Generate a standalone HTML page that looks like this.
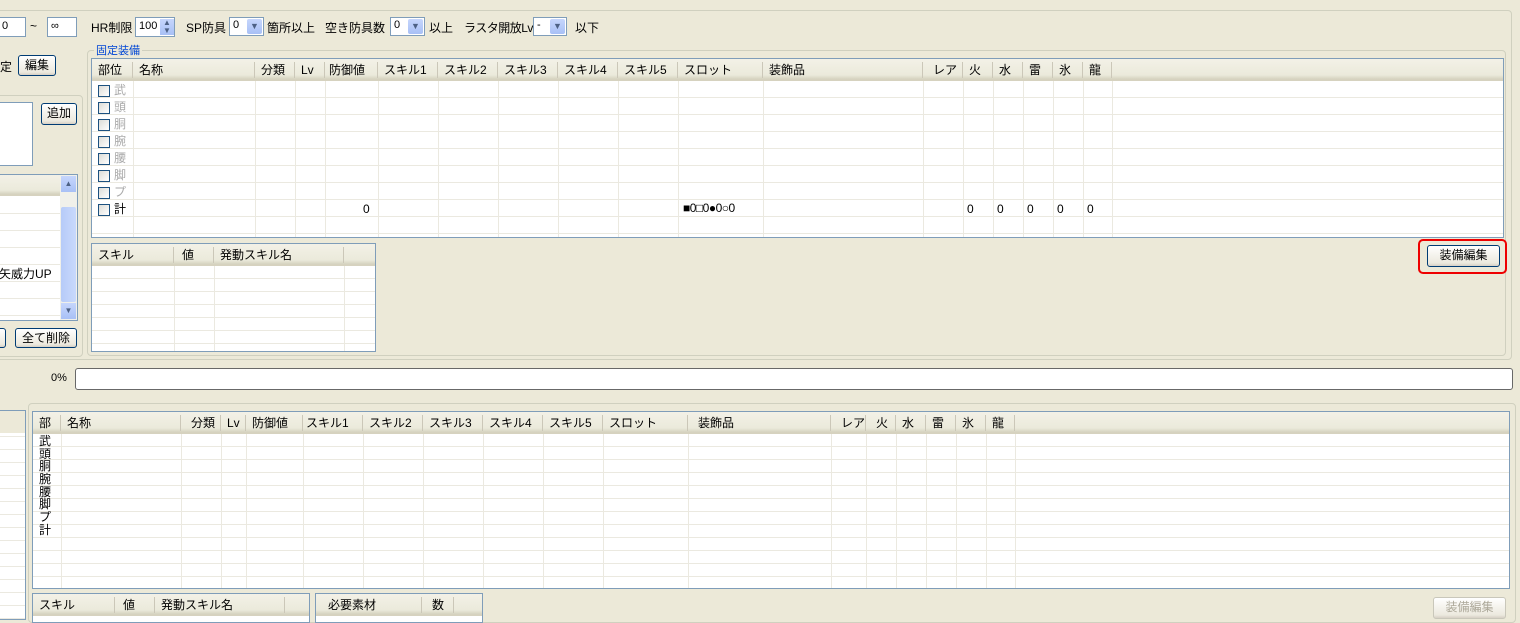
<!DOCTYPE html>
<html><head><meta charset="utf-8"><style>
*{box-sizing:border-box;margin:0;padding:0}
body{width:1520px;height:612px;overflow:hidden;background:#ece9d8;font-family:"Liberation Sans","Noto Sans CJK JP",sans-serif;font-size:12px;color:#000;position:relative}
.a{position:absolute;white-space:nowrap}
.grp{position:absolute;border:1px solid #d0d0bf;border-radius:4px}
.inp{position:absolute;background:#fff;border:1px solid #7f9db9;height:20px;padding:2px 3px;font-size:11px}
.btn{position:absolute;border:1px solid #003c74;border-radius:3px;background:linear-gradient(#fff,#ece9de 85%,#d6d0c5);text-align:center;font-size:12px;line-height:18px}
.tbl{position:absolute;border:1px solid #7f9db9;background:#fff;overflow:hidden}
.hd{position:absolute;left:0;top:0;right:0;height:22px;background:linear-gradient(#f3f1e7,#ebeadb 80%,#d6d3c0);border-bottom:2px solid #d6d2bf;display:flex}
.hd div{border-right:1px solid #cbc7b8;height:16px;margin-top:3px;padding-left:6px;line-height:16px;flex:none;font-size:12px}
.bd{position:absolute;left:0;right:0;bottom:0}
.cl{position:absolute;top:0;bottom:0;width:1px;background:#ebe9e0}
.cmb{position:absolute;background:#fff;border:1px solid #7f9db9;height:19px;font-size:11px;padding:1px 3px}
.cmb i{position:absolute;right:1px;top:1px;width:15px;height:15px;background:linear-gradient(#c6d6fc,#a8c0f6);border-radius:2px;color:#4d6185;font-style:normal;font-size:9px;text-align:center;line-height:15px}
.cb{display:inline-block;width:12px;height:12px;border:1px solid #1c5180;background:linear-gradient(135deg,#dcdcd7,#fff);vertical-align:middle;margin-right:4px}
.lb{position:absolute;left:6px;font-size:12px;line-height:12px;height:12px}
</style></head><body>

<div class="inp" style="left:-2px;top:17px;width:28px">0</div>
<div class="a" style="left:30px;top:19px">~</div>
<div class="inp" style="left:47px;top:17px;width:30px">∞</div>
<div class="a" style="left:91px;top:19px">HR制限</div>
<div class="inp" style="left:135px;top:17px;width:40px">100</div>
<div class="a" style="left:160px;top:19px;width:14px;height:16px;background:linear-gradient(#c6d6fc,#a8c0f6);font-size:8px;text-align:center;color:#4d6185;line-height:8px">▲<br>▼</div>
<div class="a" style="left:186px;top:19px">SP防具</div>
<div class="cmb" style="left:229px;top:17px;width:35px">0<i>▼</i></div>
<div class="a" style="left:267px;top:19px">箇所以上</div>
<div class="a" style="left:325px;top:19px">空き防具数</div>
<div class="cmb" style="left:390px;top:17px;width:35px">0<i>▼</i></div>
<div class="a" style="left:429px;top:19px">以上</div>
<div class="a" style="left:464px;top:19px;letter-spacing:-0.5px">ラスタ開放Lv</div>
<div class="cmb" style="left:533px;top:17px;width:34px">-<i>▼</i></div>
<div class="a" style="left:575px;top:19px">以下</div>

<div class="grp" style="left:-5px;top:10px;width:1517px;height:350px"></div>
<div class="a" style="left:0;top:58px">定</div>
<div class="btn" style="left:18px;top:55px;width:38px;height:21px">編集</div>
<div class="grp" style="left:-5px;top:95px;width:88px;height:262px"></div>
<div class="a" style="left:-2px;top:102px;width:35px;height:64px;background:#fff;border:1px solid #7f9db9"></div>
<div class="btn" style="left:41px;top:103px;width:36px;height:22px">追加</div>
<div class="a" style="left:-2px;top:174px;width:80px;height:147px;background:#fff;border:1px solid #7f9db9">
 <div style="height:21px;background:linear-gradient(#f3f1e7,#ebeadb 80%,#d6d3c0);border-bottom:2px solid #d6d2bf"></div>
 <div style="position:absolute;left:0;right:17px;top:22px;bottom:0;background:repeating-linear-gradient(#fff 0 16px,#ebe9e0 16px 17px)"></div>
 <div style="position:absolute;left:0;top:90px;font-size:12px">矢威力UP</div>
 <div style="position:absolute;right:0;top:0;width:17px;bottom:0;background:#f0f0ea">
  <div style="height:16px;margin:1px;background:linear-gradient(#c6d6fc,#a8c0f6);font-size:8px;text-align:center;color:#4d6185;line-height:16px">▲</div>
  <div style="position:absolute;top:32px;left:1px;right:1px;height:95px;background:linear-gradient(90deg,#b6cbf8,#c9d9fc);border-radius:2px"></div>
  <div style="position:absolute;bottom:1px;left:1px;right:1px;height:16px;background:linear-gradient(#c6d6fc,#a8c0f6);font-size:8px;text-align:center;color:#4d6185;line-height:16px">▼</div>
 </div>
</div>
<div class="btn" style="left:-10px;top:328px;width:16px;height:20px"></div>
<div class="btn" style="left:15px;top:328px;width:62px;height:20px">全て削除</div>

<div class="grp" style="left:87px;top:50px;width:1419px;height:306px"></div>
<div class="a" style="left:94px;top:42px;background:#ece9d8;color:#0046d5;font-size:11px;padding:0 2px">固定装備</div>

<div class="tbl" style="left:91px;top:58px;width:1413px;height:180px">
 <div class="bd" style="top:22px;background:repeating-linear-gradient(#fff 0 16px,#ebe9e0 16px 17px)">
  <div class="cl" style="left:41px"></div><div class="cl" style="left:163px"></div><div class="cl" style="left:203px"></div><div class="cl" style="left:233px"></div><div class="cl" style="left:286px"></div><div class="cl" style="left:346px"></div><div class="cl" style="left:406px"></div><div class="cl" style="left:466px"></div><div class="cl" style="left:526px"></div><div class="cl" style="left:586px"></div><div class="cl" style="left:671px"></div><div class="cl" style="left:831px"></div><div class="cl" style="left:871px"></div><div class="cl" style="left:901px"></div><div class="cl" style="left:931px"></div><div class="cl" style="left:961px"></div><div class="cl" style="left:991px"></div><div class="cl" style="left:1020px"></div>
  <div style="position:absolute;left:6px;top:1px;line-height:17px;color:#aaa">
   <div><span class="cb"></span>武</div><div><span class="cb"></span>頭</div><div><span class="cb"></span>胴</div><div><span class="cb"></span>腕</div><div><span class="cb"></span>腰</div><div><span class="cb"></span>脚</div><div><span class="cb"></span>プ</div><div style="color:#000"><span class="cb"></span>計</div>
  </div>
  <div class="a" style="left:271px;top:121px">0</div>
  <div class="a" style="left:591px;top:120px;font-size:12px;letter-spacing:-0.5px">■0□0●0○0</div>
  <div class="a" style="left:875px;top:121px">0</div>
  <div class="a" style="left:905px;top:121px">0</div>
  <div class="a" style="left:935px;top:121px">0</div>
  <div class="a" style="left:965px;top:121px">0</div>
  <div class="a" style="left:995px;top:121px">0</div>
 </div>
 <div class="hd"><div style="width:41px">部位</div><div style="width:122px">名称</div><div style="width:40px">分類</div><div style="width:30px">Lv</div><div style="width:53px;padding-left:4px">防御値</div><div style="width:60px">スキル1</div><div style="width:60px">スキル2</div><div style="width:60px">スキル3</div><div style="width:60px">スキル4</div><div style="width:60px">スキル5</div><div style="width:85px">スロット</div><div style="width:160px">装飾品</div><div style="width:40px;padding-left:10px">レア</div><div style="width:30px">火</div><div style="width:30px">水</div><div style="width:30px">雷</div><div style="width:30px">氷</div><div style="width:29px">龍</div></div>
</div>

<div class="tbl" style="left:91px;top:243px;width:285px;height:109px">
 <div class="bd" style="top:22px;background:repeating-linear-gradient(#fff 0 12px,#ebe9e0 12px 13px)">
  <div class="cl" style="left:82px"></div><div class="cl" style="left:122px"></div><div class="cl" style="left:252px"></div>
 </div>
 <div class="hd"><div style="width:82px">スキル</div><div style="width:40px;padding-left:8px">値</div><div style="width:130px">発動スキル名</div></div>
</div>

<div style="position:absolute;left:1418px;top:239px;width:89px;height:35px;border:2px solid #e00;border-radius:5px"></div>
<div class="btn" style="left:1427px;top:245px;width:73px;height:22px">装備編集</div>

<div class="a" style="left:51px;top:372px;font-size:11px">0%</div>
<div class="a" style="left:75px;top:368px;width:1438px;height:22px;background:#fff;border:1px solid #686868;border-radius:3px"></div>

<div class="grp" style="left:28px;top:403px;width:1488px;height:220px"></div>
<div class="a" style="left:-2px;top:410px;width:28px;height:210px;background:repeating-linear-gradient(#fff 0 12px,#ebe9e0 12px 13px);border:1px solid #7f9db9"><div style="height:22px;background:#ece9d8"></div></div>

<div class="tbl" style="left:32px;top:411px;width:1478px;height:178px">
 <div class="bd" style="top:22px;background:repeating-linear-gradient(#fff 0 12px,#ebe9e0 12px 13px)">
  <div class="cl" style="left:28px"></div><div class="cl" style="left:148px"></div><div class="cl" style="left:188px"></div><div class="cl" style="left:213px"></div><div class="cl" style="left:270px"></div><div class="cl" style="left:330px"></div><div class="cl" style="left:390px"></div><div class="cl" style="left:450px"></div><div class="cl" style="left:510px"></div><div class="cl" style="left:570px"></div><div class="cl" style="left:655px"></div><div class="cl" style="left:798px"></div><div class="cl" style="left:833px"></div><div class="cl" style="left:863px"></div><div class="cl" style="left:893px"></div><div class="cl" style="left:923px"></div><div class="cl" style="left:953px"></div><div class="cl" style="left:982px"></div>
  <div class="lb" style="top:1px">武</div><div class="lb" style="top:14px">頭</div><div class="lb" style="top:26px">胴</div><div class="lb" style="top:39px">腕</div><div class="lb" style="top:52px">腰</div><div class="lb" style="top:64px">脚</div><div class="lb" style="top:77px">プ</div><div class="lb" style="top:90px">計</div>
 </div>
 <div class="hd"><div style="width:28px">部</div><div style="width:120px">名称</div><div style="width:40px;padding-left:10px">分類</div><div style="width:25px">Lv</div><div style="width:57px">防御値</div><div style="width:60px;padding-left:3px">スキル1</div><div style="width:60px">スキル2</div><div style="width:60px">スキル3</div><div style="width:60px">スキル4</div><div style="width:60px">スキル5</div><div style="width:85px">スロット</div><div style="width:143px;padding-left:10px">装飾品</div><div style="width:35px;padding-left:10px">レア</div><div style="width:30px;padding-left:10px">火</div><div style="width:30px">水</div><div style="width:30px">雷</div><div style="width:30px">氷</div><div style="width:29px">龍</div></div>
</div>

<div class="tbl" style="left:32px;top:593px;width:278px;height:30px">
 <div class="hd"><div style="width:82px">スキル</div><div style="width:40px;padding-left:8px">値</div><div style="width:130px">発動スキル名</div></div>
</div>
<div class="tbl" style="left:315px;top:593px;width:168px;height:30px">
 <div class="hd"><div style="width:106px;padding-left:12px">必要素材</div><div style="width:32px;padding-left:10px">数</div></div>
</div>
<div class="btn" style="left:1433px;top:597px;width:73px;height:22px;color:#aca899;border-color:#c9c7ba">装備編集</div>
</body></html>
